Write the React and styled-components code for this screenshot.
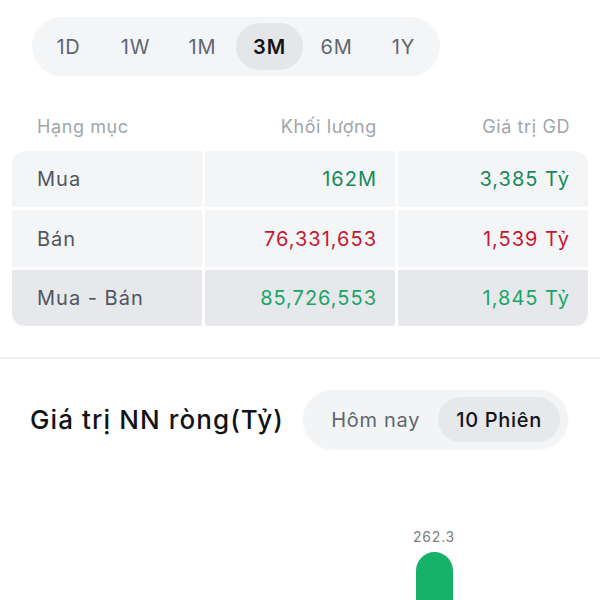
import React from "react";
import styled, { createGlobalStyle } from "styled-components";

const Global = createGlobalStyle`
  html, body { margin: 0; padding: 0; background: #ffffff; }
  body { font-family: Inter, "Noto Sans", "Liberation Sans", sans-serif; -webkit-font-smoothing: antialiased; }
  * { box-sizing: border-box; }
`;

const Page = styled.div`
  width: 600px;
  height: 600px;
  overflow: hidden;
  display: flex;
  flex-direction: column;
  background: #fff;
`;

const PeriodBar = styled.div`
  margin: 17px 0 0 32px;
  align-self: flex-start;
  display: flex;
  padding: 6px 3px;
  background: #f4f5f6;
  border-radius: 30px;
`;

const PeriodItem = styled.div`
  width: 67px;
  height: 47px;
  display: flex;
  align-items: center;
  justify-content: center;
  border-radius: 24px;
  font-size: 20px;
  font-weight: ${(p) => (p.$active ? 600 : 400)};
  color: ${(p) => (p.$active ? "#111317" : "#5f6670")};
  background: ${(p) => (p.$active ? "#e4e6e9" : "transparent")};
  letter-spacing: 0.8px;
`;

const HeaderRow = styled.div`
  margin: 39px 12px 0;
  height: 22px;
  display: grid;
  grid-template-columns: 1fr 1fr 1fr;
  column-gap: 3px;
  align-items: center;
`;

const HeadCell = styled.div`
  font-size: 18px;
  color: #a0a5ab;
  letter-spacing: 0.6px;
  text-align: ${(p) => (p.$right ? "right" : "left")};
  padding: ${(p) => (p.$right ? "0 18px 0 0" : "0 0 0 25px")};
`;

const Table = styled.div`
  margin: 14px 12px 0;
  display: grid;
  grid-template-columns: 1fr 1fr 1fr;
  grid-template-rows: 56px 57px 56px;
  gap: 3px;
  border-radius: 13px;
  overflow: hidden;
`;

const Cell = styled.div`
  display: flex;
  align-items: center;
  justify-content: ${(p) => (p.$right ? "flex-end" : "flex-start")};
  padding: ${(p) => (p.$right ? "0 18px 0 0" : "0 0 0 25px")};
  background: ${(p) => (p.$total ? "#e6e8eb" : "#f4f5f7")};
  font-size: 20px;
  letter-spacing: 1px;
  color: ${(p) =>
    p.$tone === "up" ? (p.$total ? "#1aa566" : "#178a5a") : p.$tone === "down" ? "#c8182f" : "#4f5661"};
`;

const Divider = styled.div`
  margin-top: 31px;
  height: 2px;
  background: #eff0f2;
`;

const TitleRow = styled.div`
  margin-top: 31px;
  display: flex;
  align-items: center;
  justify-content: space-between;
  padding: 0 32px 0 30px;
`;

const Title = styled.div`
  font-size: 26px;
  font-weight: 500;
  color: #111317;
  letter-spacing: 1.1px;
`;

const Toggle = styled.div`
  display: flex;
  align-items: center;
  height: 59px;
  padding: 6px 8px 6px 10px;
  background: #f3f4f6;
  border-radius: 30px;
  box-shadow: 0 1px 3px rgba(0, 0, 0, 0.04);
`;

const ToggleItem = styled.div`
  height: 45px;
  display: flex;
  align-items: center;
  padding: 0 18px;
  border-radius: 23px;
  font-size: 20px;
  letter-spacing: 0.7px;
  font-weight: ${(p) => (p.$active ? 500 : 400)};
  color: ${(p) => (p.$active ? "#111317" : "#5f6670")};
  background: ${(p) => (p.$active ? "#e6e8eb" : "transparent")};
`;

const Chart = styled.div`
  flex: 1;
  position: relative;
`;

const BarWrap = styled.div`
  position: absolute;
  left: 394px;
  top: 79px;
  width: 80px;
  display: flex;
  flex-direction: column;
  align-items: center;
  gap: 7px;
`;

const BarLabel = styled.div`
  font-size: 14px;
  color: #7a7f86;
  letter-spacing: 0.8px;
`;

const Bar = styled.div`
  width: 37px;
  height: 120px;
  background: #17b26a;
  border-radius: 19px 19px 0 0;
`;

const periods = ["1D", "1W", "1M", "3M", "6M", "1Y"];
const rows = [
  { name: "Mua", vol: "162M", val: "3,385 Tỷ", tone: "up" },
  { name: "Bán", vol: "76,331,653", val: "1,539 Tỷ", tone: "down" },
  { name: "Mua - Bán", vol: "85,726,553", val: "1,845 Tỷ", tone: "up", total: true },
];

export default function App() {
  return (
    <Page>
      <Global />
      <PeriodBar>
        {periods.map((p) => (
          <PeriodItem key={p} $active={p === "3M"}>{p}</PeriodItem>
        ))}
      </PeriodBar>
      <HeaderRow>
        <HeadCell>Hạng mục</HeadCell>
        <HeadCell $right>Khối lượng</HeadCell>
        <HeadCell $right>Giá trị GD</HeadCell>
      </HeaderRow>
      <Table>
        {rows.map((r) => (
          <React.Fragment key={r.name}>
            <Cell $total={r.total}>{r.name}</Cell>
            <Cell $right $total={r.total} $tone={r.tone}>{r.vol}</Cell>
            <Cell $right $total={r.total} $tone={r.tone}>{r.val}</Cell>
          </React.Fragment>
        ))}
      </Table>
      <Divider />
      <TitleRow>
        <Title>Giá trị NN ròng(Tỷ)</Title>
        <Toggle>
          <ToggleItem>Hôm nay</ToggleItem>
          <ToggleItem $active>10 Phiên</ToggleItem>
        </Toggle>
      </TitleRow>
      <Chart>
        <BarWrap>
          <BarLabel>262.3</BarLabel>
          <Bar />
        </BarWrap>
      </Chart>
    </Page>
  );
}
